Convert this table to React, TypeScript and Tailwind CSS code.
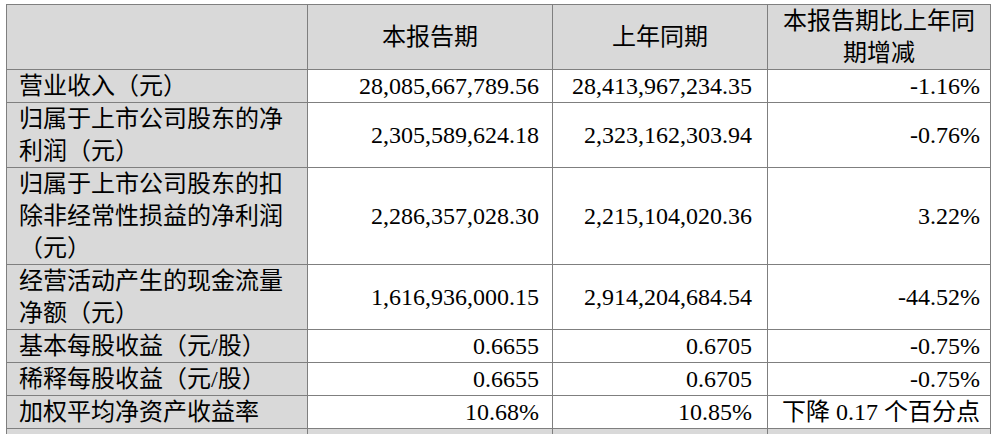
import React from 'react';

interface Row {
  label: React.ReactNode;
  current: React.ReactNode;
  previous: React.ReactNode;
  change: React.ReactNode;
}

const rows: Row[] = [
  {
    label: '营业收入（元）',
    current: '28,085,667,789.56',
    previous: '28,413,967,234.35',
    change: '-1.16%',
  },
  {
    label: (
      <>
        归属于上市公司股东的净
        <br />
        利润（元）
      </>
    ),
    current: '2,305,589,624.18',
    previous: '2,323,162,303.94',
    change: '-0.76%',
  },
  {
    label: (
      <>
        归属于上市公司股东的扣
        <br />
        除非经常性损益的净利润
        <br />
        （元）
      </>
    ),
    current: '2,286,357,028.30',
    previous: '2,215,104,020.36',
    change: '3.22%',
  },
  {
    label: (
      <>
        经营活动产生的现金流量
        <br />
        净额（元）
      </>
    ),
    current: '1,616,936,000.15',
    previous: '2,914,204,684.54',
    change: '-44.52%',
  },
  {
    label: '基本每股收益（元/股）',
    current: '0.6655',
    previous: '0.6705',
    change: '-0.75%',
  },
  {
    label: '稀释每股收益（元/股）',
    current: '0.6655',
    previous: '0.6705',
    change: '-0.75%',
  },
  {
    label: '加权平均净资产收益率',
    current: '10.68%',
    previous: '10.85%',
    change: '下降 0.17 个百分点',
  },
];

const cell = 'border border-[#7f7f7f] p-0 align-middle';

const App: React.FC = () => {
  return (
    <div className="h-[434px] w-[998px] overflow-hidden bg-white pt-[4px] pl-[6px] font-['Liberation_Serif','Noto_Sans_CJK_SC',serif]">
      <table className="table-fixed border-collapse text-[24px] leading-[32px] text-black">
        <colgroup>
          <col className="w-[301px]" />
          <col className="w-[245px]" />
          <col className="w-[215px]" />
          <col className="w-[223px]" />
        </colgroup>
        <thead>
          <tr className="bg-[#d9d9d9]">
            <th className={`${cell} h-[65px] font-normal`}></th>
            <th className={`${cell} font-normal text-center`}>本报告期</th>
            <th className={`${cell} font-normal text-center`}>上年同期</th>
            <th className={`${cell} font-normal text-center`}>
              本报告期比上年同
              <br />
              期增减
            </th>
          </tr>
        </thead>
        <tbody>
          {rows.map((row, i) => (
            <tr key={i}>
              <td className={`${cell} bg-[#d9d9d9] pl-[12px] text-left`}>{row.label}</td>
              <td className={`${cell} pr-[13px] text-right`}>{row.current}</td>
              <td className={`${cell} pr-[15px] text-right`}>{row.previous}</td>
              <td className={`${cell} pr-[10px] text-right`}>{row.change}</td>
            </tr>
          ))}
          <tr className="bg-[#d9d9d9]">
            <td className={`${cell} h-[33px]`}></td>
            <td className={cell}></td>
            <td className={cell}></td>
            <td className={cell}></td>
          </tr>
        </tbody>
      </table>
    </div>
  );
};

export default App;
